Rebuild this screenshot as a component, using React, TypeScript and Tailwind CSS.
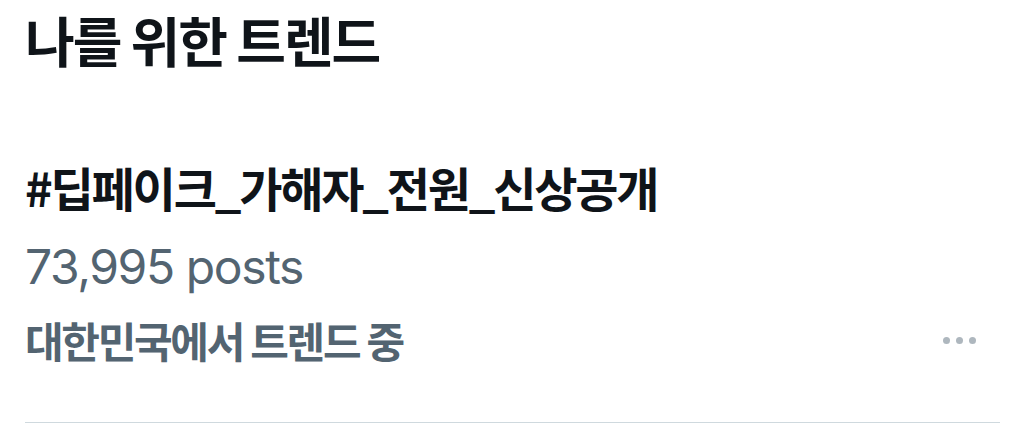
const trend = {
  tag: "#딥페이크_가해자_전원_신상공개",
  posts: "73,995 posts",
  where: "대한민국에서 트렌드 중",
};

function MoreDots() {
  return (
    <div className="flex items-center gap-[6px] pr-[24px]">
      <span className="w-[7px] h-[7px] rounded-full bg-[#aeb7be]" />
      <span className="w-[7px] h-[7px] rounded-full bg-[#aeb7be]" />
      <span className="w-[7px] h-[7px] rounded-full bg-[#aeb7be]" />
    </div>
  );
}

export default function App() {
  return (
    <div
      className="w-[1024px] h-[424px] bg-white overflow-hidden flex flex-col pb-[1px]"
      style={{ fontFamily: '"Noto Sans CJK KR", "Noto Sans", sans-serif' }}
    >
      <h1 className="pl-[25px] pt-[8px] text-[54px] leading-[64px] font-bold text-[#0f1419] tracking-[-2px]">
        나를 위한 트렌드
      </h1>

      <div className="mt-[87px] ml-[25px] mr-[24px] flex-1 flex flex-col border-b border-[#cfd9de]">
        <div className="text-[47px] leading-[56px] font-bold text-[#0f1419] tracking-[-2.2px]">
          {trend.tag}
        </div>
        <div className="mt-[24px] text-[48px] leading-[56px] text-[#536471] tracking-[-1.4px] font-['Inter',sans-serif]">
          {trend.posts}
        </div>
        <div className="mt-[21px] flex items-center justify-between">
          <span className="text-[42px] leading-[48px] font-bold text-[#536471] tracking-[-2.3px]">
            {trend.where}
          </span>
          <MoreDots />
        </div>
      </div>
    </div>
  );
}
